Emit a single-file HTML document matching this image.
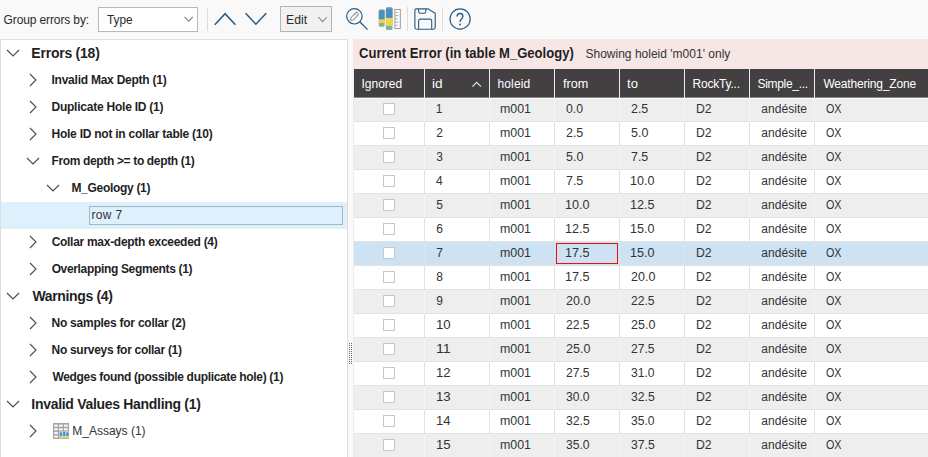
<!DOCTYPE html><html><head><meta charset="utf-8"><title>Errors</title><style>
html,body{margin:0;padding:0;}
body{width:928px;height:457px;overflow:hidden;background:#f9f9f9;font-family:"Liberation Sans",sans-serif;font-size:12px;color:#222;position:relative;}
div,span,svg,i,b{position:absolute;box-sizing:border-box;}
.t{line-height:20px;white-space:nowrap;}
#tb{left:0;top:0;width:928px;height:39px;background:#f9f9f9;}
#left{left:0;top:39px;width:348px;height:418px;background:#fff;border-left:1px solid #dedede;border-top:1px solid #dedede;border-right:1px solid #dedede;}
.chev{fill:none;stroke:#4a4a4a;stroke-width:1.1;}
.chev path{fill:none;}
#selrow{left:1px;top:202px;width:346px;height:27px;background:#def0fc;}
#selbox{left:89px;top:206px;width:254px;height:19px;border:1px solid #a8b6c0;background:#def0fc;}
#grip{left:349px;top:343px;width:3px;height:21px;background:repeating-linear-gradient(#6a6a6a 0 1px,transparent 1px 2px);}
#grip i{left:1px;top:0;width:1px;height:21px;background:#fafafa;}
#pink{left:353px;top:39px;width:575px;height:30px;background:#f6e6e6;}
#hdr{left:353px;top:69px;width:575px;height:30px;background:#ececec;}
#wl{left:354px;top:98px;width:574px;height:1px;background:#fafafa;}
#lcol{left:353px;top:69px;width:1px;height:388px;background:#ededed;}
.hc{top:69px;height:29px;background:#424041;border-bottom:1px solid #858384;}
.sort{fill:none;stroke:#e2e2e2;stroke-width:1.2;}
.r{left:354px;width:574px;height:24px;background:#fff;border-bottom:1px solid #e2e2e2;}
.r.alt{background:#eeeeee;}
.r.sel{background:#cde2f2;}
.r b{top:0;width:1px;height:24px;background:#e2e2e2;}
.r.alt b{background:#f6f6f6;}
.cb{left:29px;top:5px;width:12px;height:12px;border:1px solid #c8c8c8;background:#fff;}
#redbox{left:556px;top:243px;width:62px;height:21px;border:1px solid #f20d0d;}

</style></head><body>
<div id="tb">
<div style="left:98px;top:7px;width:100px;height:25px;border:1px solid #b9b9b9;background:#fff"></div>
<svg style="left:183px;top:14px" width="12" height="10" viewBox="0 0 12 10"><path d="M1.6 3 L5.7 7.2 L9.8 3" fill="none" stroke="#8a8a8a" stroke-width="1.1"/></svg>
<div style="left:207px;top:8px;width:1px;height:23px;background:#dcdcdc"></div>
<svg style="left:212px;top:9px" width="26" height="20" viewBox="0 0 26 20"><path d="M2.8 15.8 L13.1 4.6 L23.4 15.8" fill="none" stroke="#2a5d84" stroke-width="1.6"/></svg>
<svg style="left:243px;top:9px" width="26" height="20" viewBox="0 0 26 20"><path d="M2.6 4.2 L12.9 15.2 L23.2 4.2" fill="none" stroke="#2a5d84" stroke-width="1.6"/></svg>
<div style="left:280px;top:6px;width:52px;height:26px;border:1px solid #b4b4b4;background:#f1f1f1"></div>
<svg style="left:317px;top:14px" width="12" height="10" viewBox="0 0 12 10"><path d="M1.4 3.2 L5.6 7.6 L9.8 3.2" fill="none" stroke="#8a8a8a" stroke-width="1.1"/></svg>
<!-- magnifier -->
<svg style="left:344px;top:6px" width="26" height="26" viewBox="0 0 26 26">
<circle cx="10.4" cy="10.3" r="7.7" fill="none" stroke="#2a5d84" stroke-width="1.2"/>
<path d="M16 16 L23.6 23.6" stroke="#2a5d84" stroke-width="1.3" fill="none"/>
<g transform="translate(10.5 10.4) rotate(-45)"><path d="M-5.6 0 L-3.4 -1.6 H3.6 Q4.8 -1.6 4.8 0 Q4.8 1.6 3.6 1.6 H-3.4 Z" fill="#fdfdfd" stroke="#8f8f8f" stroke-width="1"/><path d="M2.4 -1.6 V1.6" stroke="#8f8f8f" stroke-width="0.8"/></g>
</svg>
<!-- columns icon -->
<svg style="left:377px;top:6px" width="26" height="26" viewBox="0 0 26 26">
<defs><clipPath id="c1"><rect x="1.8" y="3.8" width="5.8" height="17" rx="1.4"/></clipPath><clipPath id="c2"><rect x="8.9" y="1.5" width="6.6" height="22.6" rx="1.6"/></clipPath></defs>
<g clip-path="url(#c1)"><rect x="0" y="0" width="10" height="26" fill="#7fb59c"/><rect x="0" y="0" width="10" height="16.9" fill="#f6d24d"/><rect x="0" y="0" width="10" height="13.3" fill="#4a8fc4"/><rect x="0" y="3" width="10" height="1.6" fill="#6fa8d6"/></g>
<g clip-path="url(#c2)"><rect x="6" y="0" width="12" height="26" fill="#7fb59c"/><rect x="6" y="0" width="12" height="19.8" fill="#f6d24d"/><rect x="6" y="0" width="12" height="11.9" fill="#4a8fc4"/><rect x="6" y="1" width="12" height="1.6" fill="#6fa8d6"/></g>
<rect x="17.9" y="3.5" width="5.4" height="19" fill="#fff" stroke="#9a9a9a" stroke-width="1"/>
<path d="M18.4 6.5 h2.2 M18.4 9.7 h3.2 M18.4 12.9 h2.2 M18.4 16.1 h3.2 M18.4 19.3 h2.2" stroke="#9a9a9a" stroke-width="0.9"/>
</svg>
<div style="left:407px;top:7px;width:1px;height:24px;background:#dcdcdc"></div>
<!-- floppy -->
<svg style="left:412px;top:6px" width="26" height="26" viewBox="0 0 26 26">
<path d="M4.4 2.9 H16.2 L23.2 7.2 V21.3 Q23.2 23.2 21.3 23.2 H4.4 Q2.9 23.2 2.9 21.3 V4.6 Q2.9 2.9 4.4 2.9 Z" fill="none" stroke="#2a5d84" stroke-width="1.15" stroke-linejoin="round"/>
<path d="M6.6 2.9 V5.6 Q6.6 7.3 8.3 7.3 H12.2 Q13.8 7.3 13.8 5.6 V2.9" fill="none" stroke="#2a5d84" stroke-width="1.1"/>
<path d="M6.6 23.2 V15 Q6.6 13.1 8.5 13.1 H17.8 Q19.7 13.1 19.7 15 V23.2" fill="none" stroke="#2a5d84" stroke-width="1.1"/>
</svg>
<div style="left:442px;top:7px;width:1px;height:24px;background:#dcdcdc"></div>
<!-- help -->
<svg style="left:447px;top:6px" width="26" height="26" viewBox="0 0 26 26">
<circle cx="13.1" cy="13" r="10.1" fill="none" stroke="#2a5d84" stroke-width="1.2"/>
<path d="M10.1 10.4 Q10.1 7.5 13 7.5 Q15.9 7.5 15.9 10.2 Q15.9 11.8 14.4 13 Q13 14.1 13 15.9" fill="none" stroke="#2a5d84" stroke-width="1.35"/>
<circle cx="13" cy="18.5" r="0.95" fill="#2a5d84"/>
</svg>
</div>

<div id="left"></div><div id="selrow"></div><div id="selbox"></div>
<svg class="chev" style="left:5px;top:45px" width="16" height="16" viewBox="0 0 16 16"><path d="M2 5 L8 11 L14 5" /></svg>
<svg class="chev" style="left:25px;top:72px" width="16" height="16" viewBox="0 0 16 16"><path d="M5 2 L11 8 L5 14" /></svg>
<svg class="chev" style="left:25px;top:99px" width="16" height="16" viewBox="0 0 16 16"><path d="M5 2 L11 8 L5 14" /></svg>
<svg class="chev" style="left:25px;top:126px" width="16" height="16" viewBox="0 0 16 16"><path d="M5 2 L11 8 L5 14" /></svg>
<svg class="chev" style="left:25px;top:153px" width="16" height="16" viewBox="0 0 16 16"><path d="M2 5 L8 11 L14 5" /></svg>
<svg class="chev" style="left:45px;top:180px" width="16" height="16" viewBox="0 0 16 16"><path d="M2 5 L8 11 L14 5" /></svg>
<svg class="chev" style="left:25px;top:234px" width="16" height="16" viewBox="0 0 16 16"><path d="M5 2 L11 8 L5 14" /></svg>
<svg class="chev" style="left:25px;top:261px" width="16" height="16" viewBox="0 0 16 16"><path d="M5 2 L11 8 L5 14" /></svg>
<svg class="chev" style="left:5px;top:288px" width="16" height="16" viewBox="0 0 16 16"><path d="M2 5 L8 11 L14 5" /></svg>
<svg class="chev" style="left:25px;top:315px" width="16" height="16" viewBox="0 0 16 16"><path d="M5 2 L11 8 L5 14" /></svg>
<svg class="chev" style="left:25px;top:342px" width="16" height="16" viewBox="0 0 16 16"><path d="M5 2 L11 8 L5 14" /></svg>
<svg class="chev" style="left:25px;top:369px" width="16" height="16" viewBox="0 0 16 16"><path d="M5 2 L11 8 L5 14" /></svg>
<svg class="chev" style="left:5px;top:396px" width="16" height="16" viewBox="0 0 16 16"><path d="M2 5 L8 11 L14 5" /></svg>
<svg class="chev" style="left:25px;top:423px" width="16" height="16" viewBox="0 0 16 16"><path d="M5 2 L11 8 L5 14" /></svg>
<svg style="left:53px;top:423px" width="16" height="16" viewBox="0 0 16 16">
<rect x="0" y="0" width="16" height="16" fill="#a3a3a3"/>
<g fill="#f6f6f6">
<rect x="1.2" y="1.6" width="3.6" height="2.2"/><rect x="6" y="1.6" width="3.8" height="2.2"/><rect x="11" y="1.6" width="3.8" height="2.2"/>
<rect x="1.2" y="5.2" width="3.6" height="2.2"/><rect x="6" y="5.2" width="3.8" height="2.2"/><rect x="11" y="5.2" width="3.8" height="2.2"/>
<rect x="1.2" y="8.9" width="3.6" height="2.2"/>
<rect x="1.2" y="12.5" width="3.6" height="2.2"/>
</g>
<rect x="6.6" y="8.6" width="9.4" height="7.4" fill="#fff"/>
<rect x="7" y="9.3" width="2.4" height="3.8" fill="#4a8fc4"/><rect x="10.1" y="8.8" width="2.4" height="4.3" fill="#4a8fc4"/><rect x="13.2" y="9.3" width="2.6" height="3.8" fill="#4a8fc4"/>
<rect x="6.8" y="13.1" width="9.2" height="1.5" fill="#f6d24d"/>
<rect x="6.8" y="14.6" width="9.2" height="1.2" fill="#7fb59c"/>
</svg>

<div id="grip"><i></i></div>
<div id="pink"></div>
<div id="hdr"></div><div id="lcol"></div>
<div class="hc" style="left:354px;width:70px"></div>
<div class="hc" style="left:425px;width:64px"></div>
<div class="hc" style="left:490px;width:64px"></div>
<div class="hc" style="left:555px;width:64px"></div>
<div class="hc" style="left:620px;width:64px"></div>
<div class="hc" style="left:685px;width:64px"></div>
<div class="hc" style="left:750px;width:64px"></div>
<div class="hc" style="left:815px;width:113px"></div>
<svg class="sort" style="left:470px;top:78px" width="14" height="12" viewBox="0 0 14 12"><path d="M2.4 8.6 L6.7 4.3 L11 8.6"/></svg>
<div class="r alt" style="top:98px"><i class="cb"></i>
<b style="left:70px"></b>
<b style="left:135px"></b>
<b style="left:200px"></b>
<b style="left:265px"></b>
<b style="left:330px"></b>
<b style="left:395px"></b>
<b style="left:460px"></b>
</div>
<div class="r" style="top:122px"><i class="cb"></i>
<b style="left:70px"></b>
<b style="left:135px"></b>
<b style="left:200px"></b>
<b style="left:265px"></b>
<b style="left:330px"></b>
<b style="left:395px"></b>
<b style="left:460px"></b>
</div>
<div class="r alt" style="top:146px"><i class="cb"></i>
<b style="left:70px"></b>
<b style="left:135px"></b>
<b style="left:200px"></b>
<b style="left:265px"></b>
<b style="left:330px"></b>
<b style="left:395px"></b>
<b style="left:460px"></b>
</div>
<div class="r" style="top:170px"><i class="cb"></i>
<b style="left:70px"></b>
<b style="left:135px"></b>
<b style="left:200px"></b>
<b style="left:265px"></b>
<b style="left:330px"></b>
<b style="left:395px"></b>
<b style="left:460px"></b>
</div>
<div class="r alt" style="top:194px"><i class="cb"></i>
<b style="left:70px"></b>
<b style="left:135px"></b>
<b style="left:200px"></b>
<b style="left:265px"></b>
<b style="left:330px"></b>
<b style="left:395px"></b>
<b style="left:460px"></b>
</div>
<div class="r" style="top:218px"><i class="cb"></i>
<b style="left:70px"></b>
<b style="left:135px"></b>
<b style="left:200px"></b>
<b style="left:265px"></b>
<b style="left:330px"></b>
<b style="left:395px"></b>
<b style="left:460px"></b>
</div>
<div class="r sel" style="top:242px"><i class="cb"></i>
<b style="left:70px"></b>
<b style="left:135px"></b>
<b style="left:200px"></b>
<b style="left:265px"></b>
<b style="left:330px"></b>
<b style="left:395px"></b>
<b style="left:460px"></b>
</div>
<div class="r" style="top:266px"><i class="cb"></i>
<b style="left:70px"></b>
<b style="left:135px"></b>
<b style="left:200px"></b>
<b style="left:265px"></b>
<b style="left:330px"></b>
<b style="left:395px"></b>
<b style="left:460px"></b>
</div>
<div class="r alt" style="top:290px"><i class="cb"></i>
<b style="left:70px"></b>
<b style="left:135px"></b>
<b style="left:200px"></b>
<b style="left:265px"></b>
<b style="left:330px"></b>
<b style="left:395px"></b>
<b style="left:460px"></b>
</div>
<div class="r" style="top:314px"><i class="cb"></i>
<b style="left:70px"></b>
<b style="left:135px"></b>
<b style="left:200px"></b>
<b style="left:265px"></b>
<b style="left:330px"></b>
<b style="left:395px"></b>
<b style="left:460px"></b>
</div>
<div class="r alt" style="top:338px"><i class="cb"></i>
<b style="left:70px"></b>
<b style="left:135px"></b>
<b style="left:200px"></b>
<b style="left:265px"></b>
<b style="left:330px"></b>
<b style="left:395px"></b>
<b style="left:460px"></b>
</div>
<div class="r" style="top:362px"><i class="cb"></i>
<b style="left:70px"></b>
<b style="left:135px"></b>
<b style="left:200px"></b>
<b style="left:265px"></b>
<b style="left:330px"></b>
<b style="left:395px"></b>
<b style="left:460px"></b>
</div>
<div class="r alt" style="top:386px"><i class="cb"></i>
<b style="left:70px"></b>
<b style="left:135px"></b>
<b style="left:200px"></b>
<b style="left:265px"></b>
<b style="left:330px"></b>
<b style="left:395px"></b>
<b style="left:460px"></b>
</div>
<div class="r" style="top:410px"><i class="cb"></i>
<b style="left:70px"></b>
<b style="left:135px"></b>
<b style="left:200px"></b>
<b style="left:265px"></b>
<b style="left:330px"></b>
<b style="left:395px"></b>
<b style="left:460px"></b>
</div>
<div class="r alt" style="top:434px"><i class="cb"></i>
<b style="left:70px"></b>
<b style="left:135px"></b>
<b style="left:200px"></b>
<b style="left:265px"></b>
<b style="left:330px"></b>
<b style="left:395px"></b>
<b style="left:460px"></b>
</div>
<div id="wl"></div><div id="redbox"></div>
<div class="t" style="left:3.55px;top:10px;font-size:12px;color:#2b2b2b;letter-spacing:-0.119px;">Group errors by:</div>
<div class="t" style="left:106.72px;top:10px;font-size:12px;color:#2b2b2b;letter-spacing:0px;transform:scaleX(0.9866);transform-origin:0 0;">Type</div>
<div class="t" style="left:285.63px;top:10px;font-size:12px;color:#2b2b2b;letter-spacing:0px;transform:scaleX(1.0194);transform-origin:0 0;">Edit</div>
<div class="t" style="left:31.36px;top:43px;font-size:14px;color:#1f1f1f;letter-spacing:-0.235px;font-weight:bold;">Errors (18)</div>
<div class="t" style="left:51.51px;top:70px;font-size:12px;color:#1f1f1f;letter-spacing:-0.241px;font-weight:bold;">Invalid Max Depth (1)</div>
<div class="t" style="left:51.51px;top:97px;font-size:12px;color:#1f1f1f;letter-spacing:-0.234px;font-weight:bold;">Duplicate Hole ID (1)</div>
<div class="t" style="left:51.51px;top:124px;font-size:12px;color:#1f1f1f;letter-spacing:-0.241px;font-weight:bold;">Hole ID not in collar table (10)</div>
<div class="t" style="left:51.51px;top:151px;font-size:12px;color:#1f1f1f;letter-spacing:-0.352px;font-weight:bold;">From depth &gt;= to depth (1)</div>
<div class="t" style="left:71.51px;top:178px;font-size:12px;color:#1f1f1f;letter-spacing:-0.308px;font-weight:bold;">M_Geology (1)</div>
<div class="t" style="left:51.64px;top:232px;font-size:12px;color:#1f1f1f;letter-spacing:-0.284px;font-weight:bold;">Collar max-depth exceeded (4)</div>
<div class="t" style="left:51.64px;top:259px;font-size:12px;color:#1f1f1f;letter-spacing:-0.34px;font-weight:bold;">Overlapping Segments (1)</div>
<div class="t" style="left:32.41px;top:286px;font-size:14px;color:#1f1f1f;letter-spacing:-0.349px;font-weight:bold;">Warnings (4)</div>
<div class="t" style="left:51.51px;top:313px;font-size:12px;color:#1f1f1f;letter-spacing:-0.242px;font-weight:bold;">No samples for collar (2)</div>
<div class="t" style="left:51.51px;top:340px;font-size:12px;color:#1f1f1f;letter-spacing:-0.287px;font-weight:bold;">No surveys for collar (1)</div>
<div class="t" style="left:52.41px;top:367px;font-size:12px;color:#1f1f1f;letter-spacing:-0.329px;font-weight:bold;">Wedges found (possible duplicate hole) (1)</div>
<div class="t" style="left:31.36px;top:394px;font-size:14px;color:#1f1f1f;letter-spacing:-0.305px;font-weight:bold;">Invalid Values Handling (1)</div>
<div class="t" style="left:91.45px;top:205px;font-size:12px;color:#333;letter-spacing:0.32px;">row 7</div>
<div class="t" style="left:72.32px;top:421px;font-size:12px;color:#333;letter-spacing:-0.009px;">M_Assays (1)</div>
<div class="t" style="left:359.1px;top:43px;font-size:14px;color:#1f1f1f;letter-spacing:0px;font-weight:bold;transform:scaleX(0.9328);transform-origin:0 0;">Current Error (in table M_Geology)</div>
<div class="t" style="left:585.46px;top:44px;font-size:12px;color:#333;letter-spacing:0.009px;">Showing holeid 'm001' only</div>
<div class="t" style="left:361.45px;top:74px;font-size:12px;color:#fff;letter-spacing:0.01px;">Ignored</div>
<div class="t" style="left:431.71px;top:74px;font-size:12px;color:#fff;letter-spacing:0px;transform:scaleX(1.1335);transform-origin:0 0;">id</div>
<div class="t" style="left:497.46px;top:74px;font-size:12px;color:#fff;letter-spacing:0.16px;">holeid</div>
<div class="t" style="left:563.37px;top:74px;font-size:12px;color:#fff;letter-spacing:0px;transform:scaleX(1.0509);transform-origin:0 0;">from</div>
<div class="t" style="left:627.37px;top:74px;font-size:12px;color:#fff;letter-spacing:0px;transform:scaleX(1.0877);transform-origin:0 0;">to</div>
<div class="t" style="left:692.45px;top:74px;font-size:12px;color:#fff;letter-spacing:-0.196px;">RockTy...</div>
<div class="t" style="left:757.52px;top:74px;font-size:12px;color:#fff;letter-spacing:-0.32px;">Simple_...</div>
<div class="t" style="left:823.42px;top:74px;font-size:12px;color:#fff;letter-spacing:-0.176px;">Weathering_Zone</div>
<div class="t" style="left:435.73px;top:99px;font-size:12px;color:#333;letter-spacing:0px;">1</div>
<div class="t" style="left:499.99px;top:99px;font-size:12px;color:#333;letter-spacing:0px;transform:scaleX(1.032);transform-origin:0 0;">m001</div>
<div class="t" style="left:566.2px;top:99px;font-size:12px;color:#333;letter-spacing:0px;transform:scaleX(1.0203);transform-origin:0 0;">0.0</div>
<div class="t" style="left:631.03px;top:99px;font-size:12px;color:#333;letter-spacing:0px;transform:scaleX(1.0349);transform-origin:0 0;">2.5</div>
<div class="t" style="left:695.84px;top:99px;font-size:12px;color:#333;letter-spacing:0px;transform:scaleX(1.0204);transform-origin:0 0;">D2</div>
<div class="t" style="left:761.28px;top:99px;font-size:12px;color:#333;letter-spacing:0.056px;">andésite</div>
<div class="t" style="left:826.18px;top:99px;font-size:12px;color:#333;letter-spacing:0px;transform:scaleX(0.8955);transform-origin:0 0;">OX</div>
<div class="t" style="left:436.14px;top:123px;font-size:12px;color:#333;letter-spacing:0px;">2</div>
<div class="t" style="left:499.99px;top:123px;font-size:12px;color:#333;letter-spacing:0px;transform:scaleX(1.032);transform-origin:0 0;">m001</div>
<div class="t" style="left:566.03px;top:123px;font-size:12px;color:#333;letter-spacing:0px;transform:scaleX(1.0349);transform-origin:0 0;">2.5</div>
<div class="t" style="left:630.9px;top:123px;font-size:12px;color:#333;letter-spacing:0px;transform:scaleX(1.0368);transform-origin:0 0;">5.0</div>
<div class="t" style="left:695.84px;top:123px;font-size:12px;color:#333;letter-spacing:0px;transform:scaleX(1.0204);transform-origin:0 0;">D2</div>
<div class="t" style="left:761.28px;top:123px;font-size:12px;color:#333;letter-spacing:0.056px;">andésite</div>
<div class="t" style="left:826.18px;top:123px;font-size:12px;color:#333;letter-spacing:0px;transform:scaleX(0.8955);transform-origin:0 0;">OX</div>
<div class="t" style="left:436.2px;top:147px;font-size:12px;color:#333;letter-spacing:0px;">3</div>
<div class="t" style="left:499.99px;top:147px;font-size:12px;color:#333;letter-spacing:0px;transform:scaleX(1.032);transform-origin:0 0;">m001</div>
<div class="t" style="left:565.9px;top:147px;font-size:12px;color:#333;letter-spacing:0px;transform:scaleX(1.0368);transform-origin:0 0;">5.0</div>
<div class="t" style="left:631.03px;top:147px;font-size:12px;color:#333;letter-spacing:0px;transform:scaleX(1.0347);transform-origin:0 0;">7.5</div>
<div class="t" style="left:695.84px;top:147px;font-size:12px;color:#333;letter-spacing:0px;transform:scaleX(1.0204);transform-origin:0 0;">D2</div>
<div class="t" style="left:761.28px;top:147px;font-size:12px;color:#333;letter-spacing:0.056px;">andésite</div>
<div class="t" style="left:826.18px;top:147px;font-size:12px;color:#333;letter-spacing:0px;transform:scaleX(0.8955);transform-origin:0 0;">OX</div>
<div class="t" style="left:436.0px;top:171px;font-size:12px;color:#333;letter-spacing:0px;">4</div>
<div class="t" style="left:499.99px;top:171px;font-size:12px;color:#333;letter-spacing:0px;transform:scaleX(1.032);transform-origin:0 0;">m001</div>
<div class="t" style="left:566.03px;top:171px;font-size:12px;color:#333;letter-spacing:0px;transform:scaleX(1.0347);transform-origin:0 0;">7.5</div>
<div class="t" style="left:629.83px;top:171px;font-size:12px;color:#333;letter-spacing:0px;transform:scaleX(1.0497);transform-origin:0 0;">10.0</div>
<div class="t" style="left:695.84px;top:171px;font-size:12px;color:#333;letter-spacing:0px;transform:scaleX(1.0204);transform-origin:0 0;">D2</div>
<div class="t" style="left:761.28px;top:171px;font-size:12px;color:#333;letter-spacing:0.056px;">andésite</div>
<div class="t" style="left:826.18px;top:171px;font-size:12px;color:#333;letter-spacing:0px;transform:scaleX(0.8955);transform-origin:0 0;">OX</div>
<div class="t" style="left:436.17px;top:195px;font-size:12px;color:#333;letter-spacing:0px;">5</div>
<div class="t" style="left:499.99px;top:195px;font-size:12px;color:#333;letter-spacing:0px;transform:scaleX(1.032);transform-origin:0 0;">m001</div>
<div class="t" style="left:564.83px;top:195px;font-size:12px;color:#333;letter-spacing:0px;transform:scaleX(1.0497);transform-origin:0 0;">10.0</div>
<div class="t" style="left:629.83px;top:195px;font-size:12px;color:#333;letter-spacing:0px;transform:scaleX(1.0528);transform-origin:0 0;">12.5</div>
<div class="t" style="left:695.84px;top:195px;font-size:12px;color:#333;letter-spacing:0px;transform:scaleX(1.0204);transform-origin:0 0;">D2</div>
<div class="t" style="left:761.28px;top:195px;font-size:12px;color:#333;letter-spacing:0.056px;">andésite</div>
<div class="t" style="left:826.18px;top:195px;font-size:12px;color:#333;letter-spacing:0px;transform:scaleX(0.8955);transform-origin:0 0;">OX</div>
<div class="t" style="left:436.23px;top:219px;font-size:12px;color:#333;letter-spacing:0px;">6</div>
<div class="t" style="left:499.99px;top:219px;font-size:12px;color:#333;letter-spacing:0px;transform:scaleX(1.032);transform-origin:0 0;">m001</div>
<div class="t" style="left:564.83px;top:219px;font-size:12px;color:#333;letter-spacing:0px;transform:scaleX(1.0528);transform-origin:0 0;">12.5</div>
<div class="t" style="left:629.83px;top:219px;font-size:12px;color:#333;letter-spacing:0px;transform:scaleX(1.0497);transform-origin:0 0;">15.0</div>
<div class="t" style="left:695.84px;top:219px;font-size:12px;color:#333;letter-spacing:0px;transform:scaleX(1.0204);transform-origin:0 0;">D2</div>
<div class="t" style="left:761.28px;top:219px;font-size:12px;color:#333;letter-spacing:0.056px;">andésite</div>
<div class="t" style="left:826.18px;top:219px;font-size:12px;color:#333;letter-spacing:0px;transform:scaleX(0.8955);transform-origin:0 0;">OX</div>
<div class="t" style="left:436.14px;top:243px;font-size:12px;color:#333;letter-spacing:0px;">7</div>
<div class="t" style="left:499.99px;top:243px;font-size:12px;color:#333;letter-spacing:0px;transform:scaleX(1.032);transform-origin:0 0;">m001</div>
<div class="t" style="left:564.83px;top:243px;font-size:12px;color:#333;letter-spacing:0px;transform:scaleX(1.0528);transform-origin:0 0;">17.5</div>
<div class="t" style="left:629.83px;top:243px;font-size:12px;color:#333;letter-spacing:0px;transform:scaleX(1.0497);transform-origin:0 0;">15.0</div>
<div class="t" style="left:695.84px;top:243px;font-size:12px;color:#333;letter-spacing:0px;transform:scaleX(1.0204);transform-origin:0 0;">D2</div>
<div class="t" style="left:761.28px;top:243px;font-size:12px;color:#333;letter-spacing:0.056px;">andésite</div>
<div class="t" style="left:826.18px;top:243px;font-size:12px;color:#333;letter-spacing:0px;transform:scaleX(0.8955);transform-origin:0 0;">OX</div>
<div class="t" style="left:436.26px;top:267px;font-size:12px;color:#333;letter-spacing:0px;">8</div>
<div class="t" style="left:499.99px;top:267px;font-size:12px;color:#333;letter-spacing:0px;transform:scaleX(1.032);transform-origin:0 0;">m001</div>
<div class="t" style="left:564.83px;top:267px;font-size:12px;color:#333;letter-spacing:0px;transform:scaleX(1.0528);transform-origin:0 0;">17.5</div>
<div class="t" style="left:631.02px;top:267px;font-size:12px;color:#333;letter-spacing:0px;transform:scaleX(1.0418);transform-origin:0 0;">20.0</div>
<div class="t" style="left:695.84px;top:267px;font-size:12px;color:#333;letter-spacing:0px;transform:scaleX(1.0204);transform-origin:0 0;">D2</div>
<div class="t" style="left:761.28px;top:267px;font-size:12px;color:#333;letter-spacing:0.056px;">andésite</div>
<div class="t" style="left:826.18px;top:267px;font-size:12px;color:#333;letter-spacing:0px;transform:scaleX(0.8955);transform-origin:0 0;">OX</div>
<div class="t" style="left:436.13px;top:291px;font-size:12px;color:#333;letter-spacing:0px;">9</div>
<div class="t" style="left:499.99px;top:291px;font-size:12px;color:#333;letter-spacing:0px;transform:scaleX(1.032);transform-origin:0 0;">m001</div>
<div class="t" style="left:566.02px;top:291px;font-size:12px;color:#333;letter-spacing:0px;transform:scaleX(1.0418);transform-origin:0 0;">20.0</div>
<div class="t" style="left:631.02px;top:291px;font-size:12px;color:#333;letter-spacing:0px;transform:scaleX(1.0106);transform-origin:0 0;">22.5</div>
<div class="t" style="left:695.84px;top:291px;font-size:12px;color:#333;letter-spacing:0px;transform:scaleX(1.0204);transform-origin:0 0;">D2</div>
<div class="t" style="left:761.28px;top:291px;font-size:12px;color:#333;letter-spacing:0.056px;">andésite</div>
<div class="t" style="left:826.18px;top:291px;font-size:12px;color:#333;letter-spacing:0px;transform:scaleX(0.8955);transform-origin:0 0;">OX</div>
<div class="t" style="left:435.84px;top:315px;font-size:12px;color:#333;letter-spacing:0px;transform:scaleX(1.1003);transform-origin:0 0;">10</div>
<div class="t" style="left:499.99px;top:315px;font-size:12px;color:#333;letter-spacing:0px;transform:scaleX(1.032);transform-origin:0 0;">m001</div>
<div class="t" style="left:566.02px;top:315px;font-size:12px;color:#333;letter-spacing:0px;transform:scaleX(1.0106);transform-origin:0 0;">22.5</div>
<div class="t" style="left:631.02px;top:315px;font-size:12px;color:#333;letter-spacing:0px;transform:scaleX(1.0418);transform-origin:0 0;">25.0</div>
<div class="t" style="left:695.84px;top:315px;font-size:12px;color:#333;letter-spacing:0px;transform:scaleX(1.0204);transform-origin:0 0;">D2</div>
<div class="t" style="left:761.28px;top:315px;font-size:12px;color:#333;letter-spacing:0.056px;">andésite</div>
<div class="t" style="left:826.18px;top:315px;font-size:12px;color:#333;letter-spacing:0px;transform:scaleX(0.8955);transform-origin:0 0;">OX</div>
<div class="t" style="left:435.78px;top:339px;font-size:12px;color:#333;letter-spacing:0px;transform:scaleX(1.1819);transform-origin:0 0;">11</div>
<div class="t" style="left:499.99px;top:339px;font-size:12px;color:#333;letter-spacing:0px;transform:scaleX(1.032);transform-origin:0 0;">m001</div>
<div class="t" style="left:566.02px;top:339px;font-size:12px;color:#333;letter-spacing:0px;transform:scaleX(1.0418);transform-origin:0 0;">25.0</div>
<div class="t" style="left:631.02px;top:339px;font-size:12px;color:#333;letter-spacing:0px;transform:scaleX(1.0106);transform-origin:0 0;">27.5</div>
<div class="t" style="left:695.84px;top:339px;font-size:12px;color:#333;letter-spacing:0px;transform:scaleX(1.0204);transform-origin:0 0;">D2</div>
<div class="t" style="left:761.28px;top:339px;font-size:12px;color:#333;letter-spacing:0.056px;">andésite</div>
<div class="t" style="left:826.18px;top:339px;font-size:12px;color:#333;letter-spacing:0px;transform:scaleX(0.8955);transform-origin:0 0;">OX</div>
<div class="t" style="left:435.82px;top:363px;font-size:12px;color:#333;letter-spacing:0px;transform:scaleX(1.0908);transform-origin:0 0;">12</div>
<div class="t" style="left:499.99px;top:363px;font-size:12px;color:#333;letter-spacing:0px;transform:scaleX(1.032);transform-origin:0 0;">m001</div>
<div class="t" style="left:566.02px;top:363px;font-size:12px;color:#333;letter-spacing:0px;transform:scaleX(1.0106);transform-origin:0 0;">27.5</div>
<div class="t" style="left:630.94px;top:363px;font-size:12px;color:#333;letter-spacing:0px;transform:scaleX(1.0099);transform-origin:0 0;">31.0</div>
<div class="t" style="left:695.84px;top:363px;font-size:12px;color:#333;letter-spacing:0px;transform:scaleX(1.0204);transform-origin:0 0;">D2</div>
<div class="t" style="left:761.28px;top:363px;font-size:12px;color:#333;letter-spacing:0.056px;">andésite</div>
<div class="t" style="left:826.18px;top:363px;font-size:12px;color:#333;letter-spacing:0px;transform:scaleX(0.8955);transform-origin:0 0;">OX</div>
<div class="t" style="left:435.82px;top:387px;font-size:12px;color:#333;letter-spacing:0px;transform:scaleX(1.0967);transform-origin:0 0;">13</div>
<div class="t" style="left:499.99px;top:387px;font-size:12px;color:#333;letter-spacing:0px;transform:scaleX(1.032);transform-origin:0 0;">m001</div>
<div class="t" style="left:565.94px;top:387px;font-size:12px;color:#333;letter-spacing:0px;transform:scaleX(1.0099);transform-origin:0 0;">30.0</div>
<div class="t" style="left:630.94px;top:387px;font-size:12px;color:#333;letter-spacing:0px;transform:scaleX(1.0135);transform-origin:0 0;">32.5</div>
<div class="t" style="left:695.84px;top:387px;font-size:12px;color:#333;letter-spacing:0px;transform:scaleX(1.0204);transform-origin:0 0;">D2</div>
<div class="t" style="left:761.28px;top:387px;font-size:12px;color:#333;letter-spacing:0.056px;">andésite</div>
<div class="t" style="left:826.18px;top:387px;font-size:12px;color:#333;letter-spacing:0px;transform:scaleX(0.8955);transform-origin:0 0;">OX</div>
<div class="t" style="left:435.84px;top:411px;font-size:12px;color:#333;letter-spacing:0px;transform:scaleX(1.0835);transform-origin:0 0;">14</div>
<div class="t" style="left:499.99px;top:411px;font-size:12px;color:#333;letter-spacing:0px;transform:scaleX(1.032);transform-origin:0 0;">m001</div>
<div class="t" style="left:565.94px;top:411px;font-size:12px;color:#333;letter-spacing:0px;transform:scaleX(1.0135);transform-origin:0 0;">32.5</div>
<div class="t" style="left:630.94px;top:411px;font-size:12px;color:#333;letter-spacing:0px;transform:scaleX(1.0099);transform-origin:0 0;">35.0</div>
<div class="t" style="left:695.84px;top:411px;font-size:12px;color:#333;letter-spacing:0px;transform:scaleX(1.0204);transform-origin:0 0;">D2</div>
<div class="t" style="left:761.28px;top:411px;font-size:12px;color:#333;letter-spacing:0.056px;">andésite</div>
<div class="t" style="left:826.18px;top:411px;font-size:12px;color:#333;letter-spacing:0px;transform:scaleX(0.8955);transform-origin:0 0;">OX</div>
<div class="t" style="left:435.82px;top:435px;font-size:12px;color:#333;letter-spacing:0px;transform:scaleX(1.0963);transform-origin:0 0;">15</div>
<div class="t" style="left:499.99px;top:435px;font-size:12px;color:#333;letter-spacing:0px;transform:scaleX(1.032);transform-origin:0 0;">m001</div>
<div class="t" style="left:565.94px;top:435px;font-size:12px;color:#333;letter-spacing:0px;transform:scaleX(1.0099);transform-origin:0 0;">35.0</div>
<div class="t" style="left:630.94px;top:435px;font-size:12px;color:#333;letter-spacing:0px;transform:scaleX(1.0135);transform-origin:0 0;">37.5</div>
<div class="t" style="left:695.84px;top:435px;font-size:12px;color:#333;letter-spacing:0px;transform:scaleX(1.0204);transform-origin:0 0;">D2</div>
<div class="t" style="left:761.28px;top:435px;font-size:12px;color:#333;letter-spacing:0.056px;">andésite</div>
<div class="t" style="left:826.18px;top:435px;font-size:12px;color:#333;letter-spacing:0px;transform:scaleX(0.8955);transform-origin:0 0;">OX</div>
</body></html>
